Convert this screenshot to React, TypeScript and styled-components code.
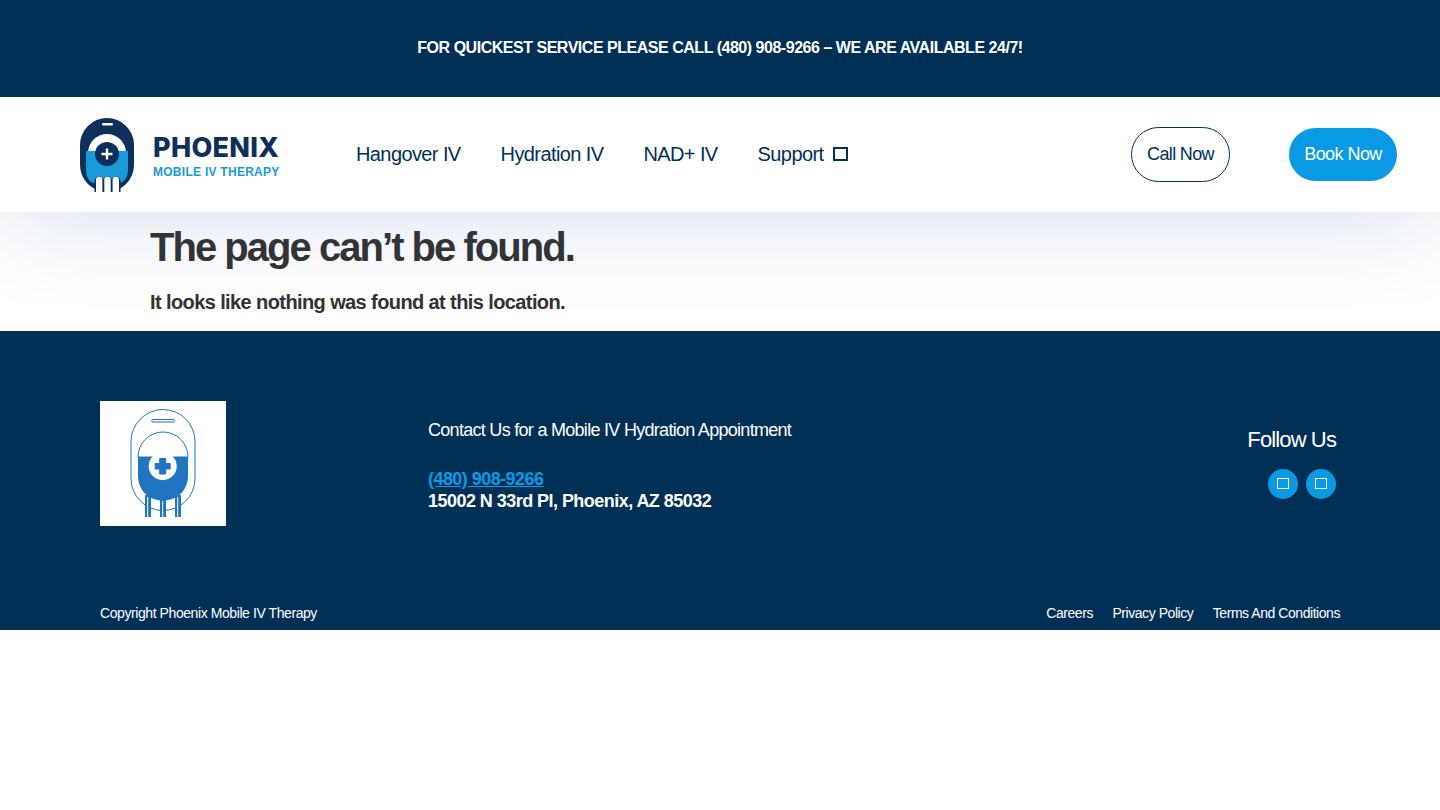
import styled, { createGlobalStyle } from "styled-components";

const Global = createGlobalStyle`
  html, body {
    margin: 0;
    padding: 0;
    background: #fff;
    font-family: "Liberation Sans", Arial, sans-serif;
  }
  * { box-sizing: border-box; }
  a { text-decoration: none; color: inherit; }
`;

const TopBar = styled.div`
  height: 97px;
  background: #013057;
  color: #fff;
  display: flex;
  justify-content: center;
  align-items: center;
  padding-bottom: 1px;
  font-size: 16px;
  font-weight: 700;
  letter-spacing: -0.475px;
  position: relative;
  z-index: 2;
`;

const Header = styled.header`
  height: 115px;
  background: #fff;
  display: flex;
  align-items: center;
  padding: 0 43px 0 80px;
  position: relative;
  z-index: 1;
  box-shadow: 0 0 100px rgba(25, 75, 155, 0.2);
`;

const Brand = styled.a`
  display: flex;
  align-items: center;
  gap: 18px;
  width: 276px;
`;

const BrandText = styled.div`
  display: flex;
  flex-direction: column;
  gap: 5px;
  padding-top: 3px;
`;

const BrandName = styled.span`
  font-family: Inter, "Liberation Sans", sans-serif;
  font-size: 27px;
  line-height: 27px;
  font-weight: 800;
  color: #0d2f5a;
  letter-spacing: 0.3px;
`;

const BrandSub = styled.span`
  font-size: 12px;
  line-height: 13px;
  font-weight: 700;
  color: #1b9ad9;
  letter-spacing: 0.27px;
`;

const Nav = styled.nav`
  display: flex;
  align-items: center;
  gap: 40px;
  flex: 1;
`;

const NavItem = styled.a`
  display: flex;
  align-items: center;
  gap: 10px;
  font-size: 20px;
  color: #013057;
  letter-spacing: -0.6px;
`;

const Caret = styled.span`
  width: 15px;
  height: 14px;
  border: 2px solid #013057;
  margin-bottom: 1px;
`;

const Actions = styled.div`
  display: flex;
  align-items: center;
  gap: 59px;
`;

const CallButton = styled.a`
  width: 99px;
  height: 55px;
  border: 1px solid #013057;
  border-radius: 28px;
  display: flex;
  align-items: center;
  justify-content: center;
  font-size: 18px;
  letter-spacing: -0.65px;
  color: #013057;
`;

const BookButton = styled.a`
  width: 108px;
  height: 53px;
  border-radius: 27px;
  background: #0a9ae4;
  display: flex;
  align-items: center;
  justify-content: center;
  font-size: 18px;
  letter-spacing: -0.55px;
  color: #fff;
`;

const Main = styled.main`
  height: 119px;
  padding: 11px 150px 0;
  background: #fff;
  color: #333;
`;

const Title = styled.h1`
  margin: 0;
  font-size: 40px;
  line-height: 48px;
  font-weight: 700;
  letter-spacing: -1.97px;
`;

const Message = styled.p`
  margin: 19px 0 0;
  font-size: 20px;
  line-height: 24px;
  font-weight: 700;
  letter-spacing: -0.6px;
`;

const Footer = styled.footer`
  height: 299px;
  background: #013057;
  color: #fff;
  padding: 70px 100px 0;
  display: flex;
  flex-direction: column;
  position: relative;
  z-index: 2;
`;

const FooterTop = styled.div`
  display: flex;
  height: 125px;
`;

const LogoBox = styled.div`
  width: 126px;
  height: 125px;
  background: #fff;
  display: flex;
  align-items: center;
  justify-content: center;
  margin-right: 202px;
`;

const Contact = styled.div`
  flex: 1;
  padding-top: 18px;
`;

const ContactTitle = styled.div`
  font-size: 18px;
  line-height: 22px;
  letter-spacing: -0.71px;
`;

const Phone = styled.a`
  display: block;
  margin-top: 27px;
  font-size: 18px;
  line-height: 22px;
  font-weight: 700;
  letter-spacing: -0.55px;
  color: #0a9ae4;
  text-decoration: underline;
`;

const Address = styled.div`
  font-size: 18px;
  line-height: 22px;
  font-weight: 700;
  letter-spacing: -0.54px;
`;

const Social = styled.div`
  display: flex;
  flex-direction: column;
  align-items: flex-end;
  padding: 26px 4px 0 0;
`;

const FollowTitle = styled.div`
  font-size: 22px;
  line-height: 26px;
  letter-spacing: -0.88px;
`;

const SocialRow = styled.div`
  display: flex;
  gap: 8px;
  margin-top: 16px;
`;

const SocialIcon = styled.a`
  width: 30px;
  height: 30px;
  border-radius: 50%;
  background: #0a9ae4;
  display: flex;
  align-items: center;
  justify-content: center;
  padding-bottom: 2px;

  &::before {
    content: "";
    width: 10px;
    height: 9px;
    border: 1.5px solid #fff;
  }
`;

const FooterBottom = styled.div`
  display: flex;
  justify-content: space-between;
  margin-top: 78px;
  font-size: 14px;
  line-height: 18px;
  letter-spacing: -0.42px;
`;

const Legal = styled.div`
  display: flex;
  gap: 19.5px;
  letter-spacing: -0.45px;
`;

const LegalLink = styled.a`
  color: #fff;
`;

function BrandMark() {
  return (
    <svg width="55" height="74" viewBox="0 0 55 74">
      <rect x="0" y="0" width="54" height="74" rx="27" fill="#0d2f5a" />
      <rect x="22" y="5" width="11" height="2.500" rx="1.250" fill="#fff" />
      <path d="M8 35a19 19 0 0 1 38 0z" fill="#fff" />
      <path d="M6 33h42v19c0 9-6 14-12 14H18C11 66 6 61 6 52z" fill="#1b9ad9" />
      <circle cx="27" cy="36" r="12" fill="#0d2f5a" />
      <path d="M25.800 30.500h2.400v4.300h4.300v2.400h-4.300v4.300h-2.400v-4.300h-4.300v-2.400h4.300z" fill="#fff" />
      <path d="M14.500 74V63a4.500 4.500 0 0 1 9 0v11zM23 74V63a4.500 4.500 0 0 1 9 0v11zM31.500 74V63a4.500 4.500 0 0 1 9 0v11z" fill="#0d2f5a" />
      <path d="M16 74V62a3.200 3.200 0 0 1 6.400 0v12zM24.300 74V62a3.200 3.200 0 0 1 6.400 0v12zM32.600 74V62a3.200 3.200 0 0 1 6.400 0v12z" fill="#fff" />
    </svg>
  );
}

function FooterMark() {
  return (
    <svg width="68" height="110" viewBox="0 0 68 110">
      <rect x="2" y="0.500" width="64" height="101" rx="32" fill="none" stroke="#1f76bf" strokeWidth="1" />
      <rect x="22.700" y="10.500" width="23" height="2.500" rx="1.250" fill="none" stroke="#1f76bf" strokeWidth="1" />
      <path d="M9 48a25 25 0 0 1 50 0" fill="none" stroke="#1f76bf" strokeWidth="1" />
      <path d="M9 47.500h50v19c0 15-11 25-25 25S9 81.500 9 66.500z" fill="#1f76bf" />
      <circle cx="33.700" cy="57.200" r="14" fill="#fff" />
      <path d="M30.700 49.500h6v5h4.500v5.500h-4.500v5h-6v-5h-4.500v-5.500h4.500z" fill="#1f76bf" strokeLinejoin="round" stroke="#1f76bf" />
      <path d="M16 86h6v22h-6zM31 91h6v17h-6zM46 86h6v22h-6z" fill="#1f76bf" />
      <path d="M18 88h1.200v20H18zM33 92h1.200v16H33zM48 88h1.200v20H48z" fill="#d6e6f4" />
    </svg>
  );
}

export default function App() {
  return (
    <>
      <Global />
      <TopBar>FOR QUICKEST SERVICE PLEASE CALL (480) 908-9266 – WE ARE AVAILABLE 24/7!</TopBar>
      <Header>
        <Brand href="#">
          <BrandMark />
          <BrandText>
            <BrandName>PHOENIX</BrandName>
            <BrandSub>MOBILE IV THERAPY</BrandSub>
          </BrandText>
        </Brand>
        <Nav>
          <NavItem href="#">Hangover IV</NavItem>
          <NavItem href="#">Hydration IV</NavItem>
          <NavItem href="#">NAD+ IV</NavItem>
          <NavItem href="#">
            Support <Caret />
          </NavItem>
        </Nav>
        <Actions>
          <CallButton href="#">Call Now</CallButton>
          <BookButton href="#">Book Now</BookButton>
        </Actions>
      </Header>
      <Main>
        <Title>The page can’t be found.</Title>
        <Message>It looks like nothing was found at this location.</Message>
      </Main>
      <Footer>
        <FooterTop>
          <LogoBox>
            <FooterMark />
          </LogoBox>
          <Contact>
            <ContactTitle>Contact Us for a Mobile IV Hydration Appointment</ContactTitle>
            <Phone href="#">(480) 908-9266</Phone>
            <Address>15002 N 33rd Pl, Phoenix, AZ 85032</Address>
          </Contact>
          <Social>
            <FollowTitle>Follow Us</FollowTitle>
            <SocialRow>
              <SocialIcon href="#" />
              <SocialIcon href="#" />
            </SocialRow>
          </Social>
        </FooterTop>
        <FooterBottom>
          <span>Copyright Phoenix Mobile IV Therapy</span>
          <Legal>
            <LegalLink href="#">Careers</LegalLink>
            <LegalLink href="#">Privacy Policy</LegalLink>
            <LegalLink href="#">Terms And Conditions</LegalLink>
          </Legal>
        </FooterBottom>
      </Footer>
    </>
  );
}
